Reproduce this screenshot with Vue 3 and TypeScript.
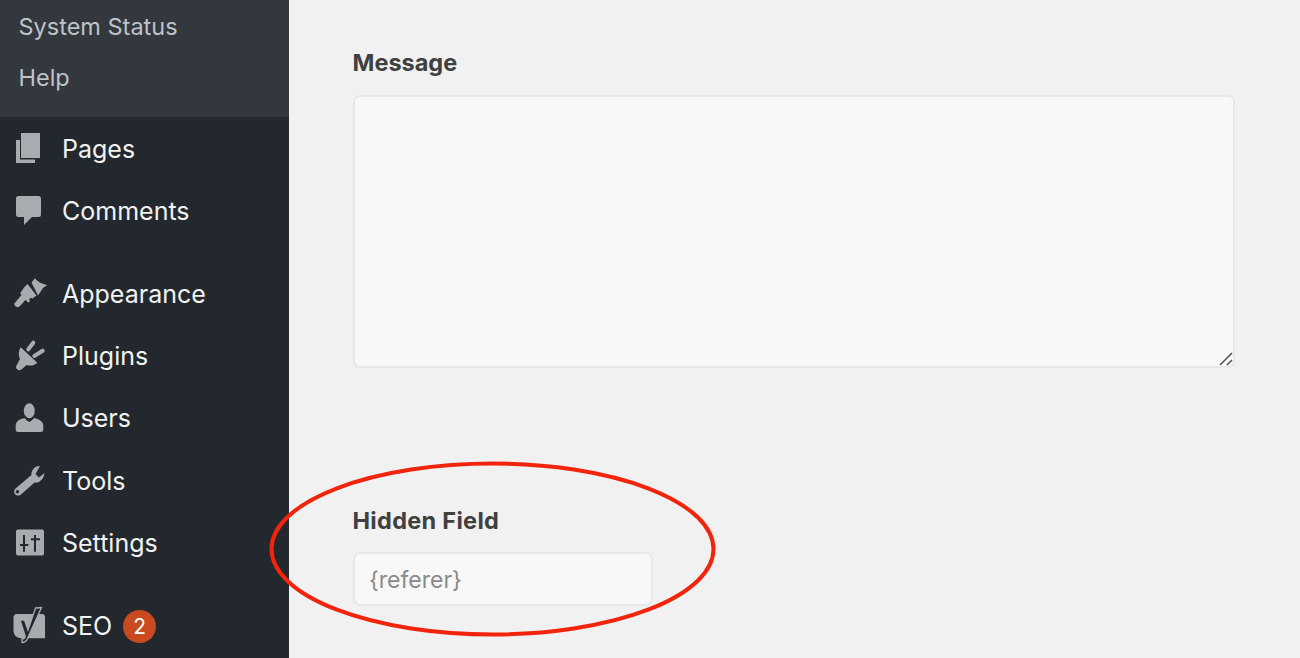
<script setup lang="ts">
interface Item { label: string; icon: string; gap?: boolean; badge?: string }
const submenu: string[] = ['System Status', 'Help']
const items: Item[] = [
  { label: 'Pages', icon: 'pages' },
  { label: 'Comments', icon: 'comments' },
  { label: 'Appearance', icon: 'appearance', gap: true },
  { label: 'Plugins', icon: 'plugins' },
  { label: 'Users', icon: 'users' },
  { label: 'Tools', icon: 'tools' },
  { label: 'Settings', icon: 'settings' },
  { label: 'SEO', icon: 'seo', gap: true, badge: '2' },
]
</script>

<template>
  <div class="page">
    <aside class="sidebar">
      <ul class="submenu">
        <li v-for="s in submenu" :key="s">{{ s }}</li>
      </ul>
      <ul class="menu">
        <li v-for="it in items" :key="it.label" class="item" :class="{ gap: it.gap }">
          <svg class="icon" viewBox="0 0 36 36" aria-hidden="true">
            <template v-if="it.icon === 'pages'">
              <path d="M9 2h19v25H9z" />
              <path d="M4 9h4v19.500h15V32H4z" />
            </template>
            <path v-else-if="it.icon === 'comments'" d="M6.500 3h20A2.500 2.500 0 0 1 29 5.500v16a2.500 2.500 0 0 1-2.500 2.500H20l-8 8v-8H6.500A2.500 2.500 0 0 1 4 21.500v-16A2.500 2.500 0 0 1 6.500 3z" />
            <template v-else-if="it.icon === 'appearance'">
              <path d="M19.500 6.500 23 2.300c2 2.500 4 4 6.500 5 2 .8 4 1.400 5.800 2-2.500 1-4.400 2.700-5.600 4.700-1.200 2-2.400 3.800-3.700 5.500z" />
              <path d="M12 11.500 15.500 8l9 11.500-4 3-1.800-.8-1.700 1.800 1.200 1.700-2.200 1.300-2.300-2.800-6.200 6.800c-1.800 1.700-5.800-.3-5-3.200l7-8.300-1.300-1.800z" />
            </template>
            <template v-else-if="it.icon === 'plugins'">
              <path d="M8.700 9.300 25.300 24.700c-3 3-7 3.500-10.600 2.300l-6 5c-2 1-5-1-4.700-3.500l4-7.500C6 17 6.500 13 8.700 9.300z" />
              <path class="line" d="M16.300 11.300 21.300 4.700M22.300 18 30.700 12.700" />
            </template>
            <template v-else-if="it.icon === 'users'">
              <ellipse cx="17.300" cy="10.700" rx="5.500" ry="7.500" />
              <path d="M12.500 18c1.500 2 3.200 3.300 4.800 4 1.600-.7 3.300-2 4.800-4 5 .8 8.700 3.500 9.200 7v5c0 1-1 2-2.800 2H6.500C4.700 32 3.700 31 3.700 30v-5c.5-3.500 3.800-6.200 8.800-7z" />
            </template>
            <path v-else-if="it.icon === 'tools'" fill-rule="evenodd" d="M28 3C22 3 19 8 19.500 12L3.500 25.500C1.500 27.500 2 31 4 32c2 1 4 .5 5-.5l13.500-12c4.500 1 9.500-3.500 10-9.500L27 14.500 23.500 11zM5.500 27a1.700 1.700 0 1 1 0 3.400 1.700 1.700 0 0 1 0-3.400z" />
            <path v-else-if="it.icon === 'settings'" fill-rule="evenodd" d="M6 4.500h24a2 2 0 0 1 2 2v22a2 2 0 0 1-2 2H6a2 2 0 0 1-2-2v-22a2 2 0 0 1 2-2zM11 10v9H8v2h3v5.700h2V21h3.300v-2H13v-9zM22 10v3.300h-3v2h3v11.400h2V15.300h4v-2h-4V10z" />
            <template v-else>
              <path d="M5 6h25a3 3 0 0 1 3 3v21.300H9A7.500 7.500 0 0 1 1.500 23V9.500A3.500 3.500 0 0 1 5 6z" />
              <path class="y" d="M23.500 0 29.500-.5 15 31.500c-1 2.200-3 3-5 3V31c1.500 0 2.800-.8 3.300-2.500L8 12h4.500l3.500 10z" />
            </template>
          </svg>
          <span>{{ it.label }}</span>
          <span v-if="it.badge" class="badge">{{ it.badge }}</span>
        </li>
      </ul>
    </aside>

    <main class="main">
      <section class="field">
        <label class="label">Message</label>
        <div class="textarea">
          <svg class="grip" viewBox="0 0 14 14" aria-hidden="true">
            <path d="M1 13 13 1M8 13l5-5" />
          </svg>
        </div>
      </section>
      <section class="field hidden-field">
        <label class="label">Hidden Field</label>
        <div class="input">{referer}</div>
      </section>
    </main>

    <svg class="annotation" viewBox="0 0 1300 658" aria-hidden="true">
      <ellipse cx="492.500" cy="549" rx="221" ry="85.500" />
    </svg>
  </div>
</template>

<style>
html, body { margin: 0; overflow: hidden; }
</style>

<style scoped>
.page {
  position: relative;
  display: flex;
  width: 1300px;
  height: 658px;
  overflow: hidden;
  background: #f1f1f1;
  font-family: Inter, "Liberation Sans", sans-serif;
}
.sidebar {
  width: 289px;
  flex: none;
  background: #23282e;
  border-right: 1px solid #f4f4f4;
  color: #f1f2f3;
}
.sidebar ul { list-style: none; margin: 0; padding: 0; }
.submenu {
  height: 117px;
  box-sizing: border-box;
  padding: 0.500px 0 0 18.500px !important;
  background: #33383e;
  color: #bfc3c8;
  font-size: 23.500px;
}
.submenu li { height: 51px; line-height: 51px; }
.item {
  display: flex;
  align-items: center;
  height: 62.300px;
  font-size: 25px;
}
.menu { padding-top: 1px !important; }
.item.gap { margin-top: 20px; }
.item.gap:last-child { margin-top: 21px; }
.icon {
  width: 36px;
  height: 36px;
  margin-left: 12px;
  margin-right: 14px;
  flex: none;
  fill: #a8abb0;
  overflow: visible;
}
.icon .y { fill: #23282e; stroke: #a8abb0; stroke-width: 1.300; }
.icon .line { fill: none; stroke: #a8abb0; stroke-width: 4; stroke-linecap: round; }
.badge {
  width: 33px;
  height: 33px;
  margin-left: 11px;
  border-radius: 50%;
  background: #ca4a1f;
  color: #fff;
  font-size: 21px;
  line-height: 33px;
  text-align: center;
}
.main {
  flex: 1;
  padding: 45px 65px 0 62.500px;
  color: #404040;
}
.field { display: flex; flex-direction: column; }
.hidden-field { margin-top: 135px; }
.hidden-field .label { letter-spacing: 0.300px; }
.label {
  font-size: 23.500px;
  font-weight: 700;
  line-height: 36px;
  margin-bottom: 14px;
}
.hidden-field .label { margin-bottom: 13px; }
.textarea, .input {
  box-sizing: border-box;
  background: #f8f8f8;
  border: 2px solid #e8e8e8;
  border-radius: 7px;
}
.textarea {
  position: relative;
  height: 273px;
}
.grip {
  position: absolute;
  right: 0;
  bottom: 0;
  width: 14px;
  height: 14px;
  fill: none;
  stroke: #4d4d4d;
  stroke-width: 1.500;
}
.input {
  width: 300px;
  height: 54px;
  padding-left: 14.500px;
  color: #8a8a8a;
  font-size: 23px;
  line-height: 52px;
}
.annotation {
  position: absolute;
  inset: 0;
  width: 1300px;
  height: 658px;
  pointer-events: none;
}
.annotation ellipse {
  fill: none;
  stroke: #f2240c;
  stroke-width: 4;
}
</style>
